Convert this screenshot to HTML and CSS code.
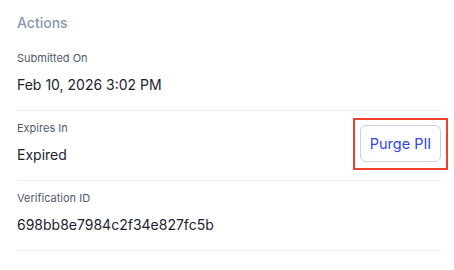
FILE: index.html
```html
<!DOCTYPE html>
<html lang="en">
<head>
<meta charset="utf-8">
<link rel="stylesheet" href="styles.css">
</head>
<body>
<section class="panel">
  <h2 class="panel-title">Actions</h2>
  <div class="row">
    <div class="field">
      <div class="label">Submitted On</div>
      <div class="value">Feb 10, 2026 3:02 PM</div>
    </div>
  </div>
  <div class="row">
    <div class="field">
      <div class="label">Expires In</div>
      <div class="value">Expired</div>
    </div>
    <div class="action">
      <button class="btn" type="button">Purge PII</button>
      <span class="highlight"></span>
    </div>
  </div>
  <div class="row">
    <div class="field">
      <div class="label">Verification ID</div>
      <div class="value">698bb8e7984c2f34e827fc5b</div>
    </div>
  </div>
</section>
</body>
</html>
```

FILE: styles.css
```css
* { box-sizing: border-box; }
html, body { margin: 0; background: #ffffff; }
body {
  font-family: Inter, "Noto Sans", "Liberation Sans", sans-serif;
  width: 454px;
  height: 270px;
  overflow: hidden;
}
.panel {
  padding: 13px 13px 0 17px;
}
.panel-title {
  margin: 0 0 8px;
  font-size: 14px;
  line-height: 20px;
  font-weight: 500;
  color: #8a96ab;
}
.row {
  display: flex;
  justify-content: space-between;
  align-items: center;
  padding: 9px 0 13px;
  border-bottom: 1px solid #eceef2;
}
.field {
  display: flex;
  flex-direction: column;
  gap: 7px;
}
.label {
  font-size: 11px;
  line-height: 16px;
  color: #4f5a6d;
}
.value {
  font-size: 14px;
  line-height: 24px;
  color: #1d2330;
}
.action {
  position: relative;
}
.btn {
  display: block;
  height: 37px;
  width: 81px;
  padding: 0;
  border: 1px solid #c8d2de;
  border-radius: 6px;
  background: #ffffff;
  color: #3546e6;
  font-family: inherit;
  font-size: 14.5px;
  font-weight: 400;
}
.highlight {
  position: absolute;
  top: -7px;
  left: -7px;
  right: -7px;
  bottom: -8px;
  border: 2px solid #f0402c;
}
```
